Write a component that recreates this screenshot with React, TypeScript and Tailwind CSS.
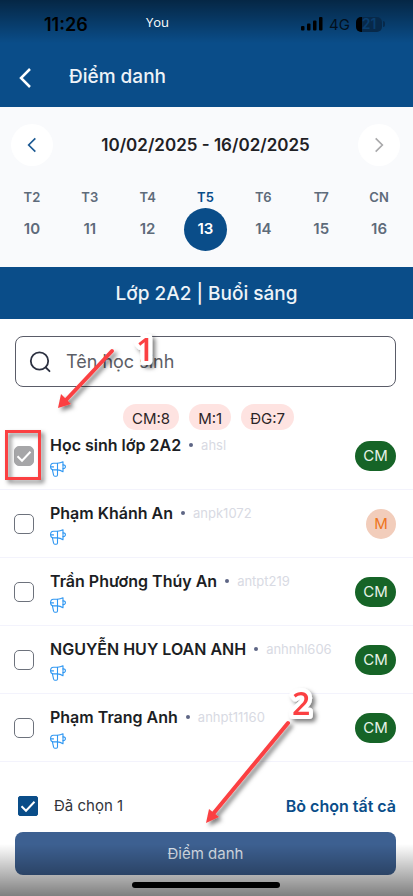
import { useState } from "react";

type Status = "CM" | "M";

interface Student {
  code: string;
  name: string;
  status: Status;
  locked?: boolean;
}

const days = [
  { label: "T2", date: 10 },
  { label: "T3", date: 11 },
  { label: "T4", date: 12 },
  { label: "T5", date: 13 },
  { label: "T6", date: 14 },
  { label: "T7", date: 15 },
  { label: "CN", date: 16 },
];

const totals = ["CM:8", "M:1", "ĐG:7"];

const students: Student[] = [
  { code: "ahsl", name: "Học sinh lớp 2A2", status: "CM", locked: true },
  { code: "anpk1072", name: "Phạm Khánh An", status: "M" },
  { code: "antpt219", name: "Trần Phương Thúy An", status: "CM" },
  { code: "anhnhl606", name: "NGUYỄN HUY LOAN ANH", status: "CM" },
  { code: "anhpt11160", name: "Phạm Trang Anh", status: "CM" },
];

const Chevron = ({ d, className }: { d: string; className: string }) => (
  <svg
    viewBox="0 0 16 24"
    fill="none"
    stroke="currentColor"
    className={className}
    aria-hidden="true"
  >
    <path d={d} />
  </svg>
);

const Check = () => (
  <svg
    viewBox="0 0 20 20"
    fill="none"
    stroke="white"
    strokeWidth="2"
    className="pointer-events-none absolute inset-0"
    aria-hidden="true"
  >
    <path d="M3.5 10.2 8 14.7 16.5 5.8" />
  </svg>
);

const Megaphone = () => (
  <svg
    viewBox="0 0 16 16"
    fill="none"
    stroke="#2f97f2"
    strokeWidth="1.1"
    strokeLinejoin="round"
    strokeLinecap="round"
    className="size-4"
    aria-hidden="true"
  >
    <path d="M7.5 2.3H3.400C1.500 2.300.6 3.900.6 5.600s.9 3.300 2.800 3.300h4.100z" />
    <path d="M7.500 2.300c2-.1 3.700-.6 5.500-1.500v10c-1.800-1.100-3.500-1.800-5.500-1.900" />
    <path d="M13 3.900c1.500-.1 2.400.5 2.400 1.800S14.500 7.700 13 7.600" />
    <path d="M2.400 8.900l1.200 5.300c.2.700.5 1 1.200 1h1.500c.8 0 1.200-.4 1.200-1.200V8.900M.8 5.900h2.700" />
  </svg>
);

const StatusBar = () => (
  <div className="flex h-12 items-center pr-7 pl-11">
    <span className="w-[102px] pt-0.5 text-lg leading-6 font-semibold text-black">
      11:26
    </span>
    <span className="flex-1 pb-0.5 font-['Open_Sans',sans-serif] text-[13px] font-medium text-white">
      You
    </span>
    <svg viewBox="0 0 22 14" className="mr-1.5 h-3.5 w-[22px]" aria-hidden="true">
      <rect x="0" y="9" width="3.500" height="4.500" rx="1" />
      <rect x="6" y="6.500" width="3.500" height="7" rx="1" />
      <rect x="12" y="3.500" width="3.500" height="10" rx="1" />
      <rect x="18" y="0" width="3.500" height="13.500" rx="1" />
    </svg>
    <span className="mr-1.5 pt-0.5 text-[15px] text-[#03101c]">4G</span>
    <div className="flex h-[15px] w-[26px] items-center justify-center overflow-hidden rounded-[5px] bg-linear-to-r from-black from-22% to-[#07294a] to-22% text-sm font-semibold text-[#0a3e6e]">
      21
    </div>
    <div className="ml-px h-1.5 w-0.5 rounded-r-sm bg-[#07294a]" />
  </div>
);

const StatusBadge = ({ status }: { status: Status }) => (
  <button
    type="button"
    className={
      status === "CM"
        ? "h-[30px] w-[41px] rounded-full bg-[#166427] pt-0.5 text-[15px] text-[#e6f2e8]"
        : "size-[30px] rounded-full bg-[#f2cdbb] pt-0.5 text-[15px] text-[#ee7420]"
    }
  >
    {status}
  </button>
);

const StudentRow = ({
  student,
  checked,
  onToggle,
}: {
  student: Student;
  checked: boolean;
  onToggle: (code: string) => void;
}) => (
  <li className="flex h-[68px] items-center border-b border-[#f3f3fc] pr-[17px] pl-3.5">
    <div className="relative mr-4 size-5">
      <input
        id={student.code}
        type="checkbox"
        checked={checked}
        disabled={student.locked}
        onChange={() => onToggle(student.code)}
        className="block size-5 appearance-none rounded-[5px] border border-[#6d727c] checked:border-[#a6a6a8] checked:bg-[#a6a6a8]"
      />
      {checked && <Check />}
    </div>
    <div className="flex flex-1 flex-col gap-1.5">
      <label
        htmlFor={student.code}
        className="flex items-center text-base leading-5 font-semibold text-[#1c1e24]"
      >
        {student.name}
        <span className="mx-2 size-1 rounded-full bg-[#5e6685]" />
        <span className="text-[13px] font-normal text-[#d8dae3]">
          {student.code}
        </span>
      </label>
      <Megaphone />
    </div>
    <StatusBadge status={student.status} />
  </li>
);

const Callouts = () => (
  <svg
    width="413"
    height="896"
    viewBox="0 0 413 896"
    className="pointer-events-none absolute top-0 left-0 overflow-visible"
  >
    <defs>
      <filter id="shadow" x="-30%" y="-30%" width="170%" height="170%">
        <feDropShadow dx="3" dy="3" stdDeviation="2" floodOpacity="0.5" />
      </filter>
    </defs>
    <g filter="url(#shadow)" fill="#fb4143" stroke="#fb4143">
      <g strokeWidth="4" strokeLinecap="round">
        <path d="M112 351 66 400" />
        <path d="M288 723 213 814" />
      </g>
      <path stroke="none" d="M58 408 61 394 71 404z" />
      <path stroke="none" d="M206 823 209 809 219 817z" />
      <rect x="6.500" y="431.500" width="33" height="47" fill="none" strokeWidth="3" />
    </g>
    <g
      filter="url(#shadow)"
      fill="#fb4143"
      stroke="white"
      strokeWidth="8"
      strokeLinejoin="round"
      paintOrder="stroke"
      fontFamily="Open Sans, sans-serif"
      fontWeight="600"
      fontSize="32"
    >
      <text x="136" y="361">1</text>
      <text x="292" y="715">2</text>
    </g>
  </svg>
);

const App = () => {
  const [selected, setSelected] = useState<string[]>(["ahsl"]);
  const [currentDate, setCurrentDate] = useState(13);

  const toggle = (code: string) =>
    setSelected((prev) =>
      prev.includes(code) ? prev.filter((c) => c !== code) : [...prev, code]
    );

  return (
    <div className="relative flex min-h-screen flex-col bg-white font-[Inter,sans-serif]">
      <header className="bg-[#0a4d89]">
        <div className="bg-linear-to-b from-black/50 to-transparent to-90%">
          <StatusBar />
        </div>
        <div className="flex h-[59px] items-center pl-[17px]">
          <button type="button" aria-label="Quay lại" className="text-white">
            <Chevron d="M13 3 4 12 13 21" className="h-6 w-4 stroke-[2.500]" />
          </button>
          <h1 className="ml-9 text-[19px] font-medium text-[#eef3f8]">
            Điểm danh
          </h1>
        </div>
      </header>

      <section className="h-40 bg-[#f9fafc] pt-[17px]">
        <div className="flex items-center justify-between pr-[13px] pl-[11px]">
          <button
            type="button"
            aria-label="Tuần trước"
            className="flex size-[42px] items-center justify-center rounded-full bg-white text-[#1d5a93]"
          >
            <Chevron d="M12 4 4 12 12 20" className="h-5 w-3.5 stroke-2" />
          </button>
          <h2 className="pt-0.5 text-[17px] font-semibold text-[#1f2125]">
            10/02/2025 - 16/02/2025
          </h2>
          <button
            type="button"
            aria-label="Tuần sau"
            className="flex size-[42px] items-center justify-center rounded-full bg-white text-[#a9a9ab]"
          >
            <Chevron d="M4 4 12 12 4 20" className="h-5 w-3.5 stroke-2" />
          </button>
        </div>
        <div className="mt-[22px] grid grid-cols-7 pr-[5px] pl-[3px]">
          {days.map((day) => {
            const active = day.date === currentDate;
            return (
              <button
                key={day.date}
                type="button"
                onClick={() => setCurrentDate(day.date)}
                className="flex flex-col items-center text-[#5e6b7a]"
              >
                <span
                  className={`text-[13px] leading-[18px] font-semibold ${
                    active ? "text-[#0a4d89]" : ""
                  }`}
                >
                  {day.label}
                </span>
                <span
                  className={`mt-0.5 flex size-[43px] items-center justify-center rounded-full text-[15px] font-semibold ${
                    active ? "bg-[#0a4d89] text-white" : ""
                  }`}
                >
                  {day.date}
                </span>
              </button>
            );
          })}
        </div>
      </section>

      <div className="flex h-[52px] items-center justify-center bg-[#0a4d89] pt-0.5 text-[19px] font-medium text-[#eef3f8]">
        Lớp 2A2 | Buổi sáng
      </div>

      <main>
        <div className="mt-[17px] mr-[17px] ml-[15px] flex h-[51px] items-center gap-3.5 rounded-lg border border-[#5a5c68] px-3">
          <svg
            viewBox="0 0 24 24"
            fill="none"
            stroke="#2b3040"
            strokeWidth="1.800"
            strokeLinecap="round"
            className="size-6"
            aria-hidden="true"
          >
            <circle cx="11.500" cy="11" r="8.700" />
            <path d="m17.800 17.500 3.700 3.700" />
          </svg>
          <input
            type="text"
            aria-label="Tên học sinh"
            placeholder="Tên học sinh"
            className="min-w-0 flex-1 text-lg text-[#4b4e57] outline-none placeholder:text-[#5c5e66]"
          />
        </div>

        <div className="mt-[17px] flex h-[26px] justify-center gap-2.5 pl-1">
          {totals.map((total) => (
            <span
              key={total}
              className="rounded-full bg-[#fee3e1] px-[9px] pt-[3px] text-[15px] leading-6 text-[#2c2527]"
            >
              {total}
            </span>
          ))}
        </div>

        <ul className="-mt-2">
          {students.map((student) => (
            <StudentRow
              key={student.code}
              student={student}
              checked={selected.includes(student.code)}
              onToggle={toggle}
            />
          ))}
        </ul>
      </main>

      <footer className="mt-auto pr-[17px] pb-2 pl-[15px]">
        <div className="flex h-[52px] items-center justify-between">
          <div className="flex items-center">
            <div className="relative mr-4 ml-[3px] size-5">
              <input
                id="selected-count"
                type="checkbox"
                checked={selected.length > 0}
                onChange={() => setSelected([])}
                className="block size-5 appearance-none rounded-xs border border-[#0a4d89] checked:bg-[#0a4d89]"
              />
              {selected.length > 0 && <Check />}
            </div>
            <label htmlFor="selected-count" className="text-[15px] text-[#32343b]">
              Đã chọn {selected.length}
            </label>
          </div>
          <button
            type="button"
            onClick={() => setSelected([])}
            className="text-base font-semibold text-[#0a4d89]"
          >
            Bỏ chọn tất cả
          </button>
        </div>
        <button
          type="button"
          className="h-[43px] w-full rounded-lg bg-[#3d6091] pt-0.5 text-[15px] text-[#dde4ee]"
        >
          Điểm danh
        </button>
        <div className="pointer-events-none absolute inset-x-0 bottom-0 h-[52px] bg-linear-to-b from-transparent to-black/50" />
        <div className="relative mx-auto mt-[7px] h-1.5 w-[148px] rounded-full bg-black" />
      </footer>

      <Callouts />
    </div>
  );
};

export default App;
